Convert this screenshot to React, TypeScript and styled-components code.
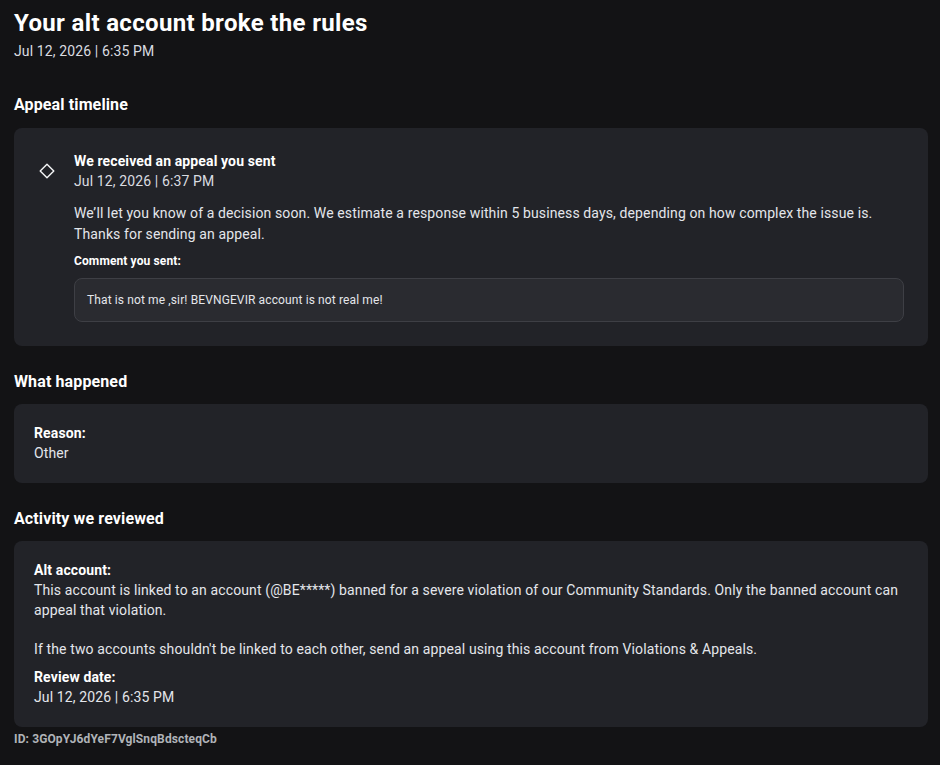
import styled, { createGlobalStyle } from 'styled-components';

const GlobalStyle = createGlobalStyle`
	html, body {
		margin: 0;
		background: #131315;
	}
	body {
		font-family: Roboto, 'Liberation Sans', sans-serif;
		color: #e4e6eb;
		letter-spacing: 0.12px;
		-webkit-font-smoothing: antialiased;
	}
`;

const DiamondIcon = () => (
	<svg width="16" height="16" viewBox="0 0 16 16" fill="none">
		<path d="M8 1.2 L14.8 8 L8 14.8 L1.2 8 Z" stroke="#f5f6f7" strokeWidth="1.4" strokeLinejoin="round" />
	</svg>
);

export default function App() {
	return (
		<>
			<GlobalStyle />
			<Page>
				<Title>Your alt account broke the rules</Title>
				<DateLine>Jul 12, 2026 | 6:35 PM</DateLine>

				<Section first>
					<SectionTitle>Appeal timeline</SectionTitle>
					<Card timeline>
						<TimelineItem>
							<IconCell>
								<DiamondIcon />
							</IconCell>
							<div>
								<ItemTitle>We received an appeal you sent</ItemTitle>
								<DateLine>Jul 12, 2026 | 6:37 PM</DateLine>
							</div>
							<ItemBody>
								<Paragraph>
									We’ll let you know of a decision soon. We estimate a response within 5 business days, depending on how
									complex the issue is. Thanks for sending an appeal.
								</Paragraph>
								<SmallLabel>Comment you sent:</SmallLabel>
								<CommentBox>That is not me ,sir! BEVNGEVIR account is not real me!</CommentBox>
							</ItemBody>
						</TimelineItem>
					</Card>
				</Section>

				<Section>
					<SectionTitle>What happened</SectionTitle>
					<Card>
						<Field>
							<Label>Reason:</Label>
							<Value>Other</Value>
						</Field>
					</Card>
				</Section>

				<Section>
					<SectionTitle>Activity we reviewed</SectionTitle>
					<Card>
						<Field>
							<Label>Alt account:</Label>
							<Value>
								This account is linked to an account (@BE*****) banned for a severe violation of our Community Standards.
								Only the banned account can appeal that violation.
							</Value>
							<Value spaced>
								If the two accounts shouldn't be linked to each other, send an appeal using this account from Violations
								&amp; Appeals.
							</Value>
						</Field>
						<Field>
							<Label>Review date:</Label>
							<Value>Jul 12, 2026 | 6:35 PM</Value>
						</Field>
					</Card>
					<IdLine>ID: 3GOpYJ6dYeF7VglSnqBdscteqCb</IdLine>
				</Section>
			</Page>
		</>
	);
}

const Page = styled.div`
	padding: 9px 12px 24px 14px;
`;

const Title = styled.h1`
	margin: 0 0 4px;
	font-size: 24px;
	line-height: 28px;
	font-weight: 700;
	letter-spacing: 0.34px;
	color: #ffffff;
`;

const DateLine = styled.div`
	font-size: 14px;
	line-height: 20px;
	color: #dadce0;
`;

const SectionTitle = styled.h2`
	margin: 0 0 11px;
	font-size: 16px;
	line-height: 22px;
	font-weight: 700;
	color: #ffffff;
`;

const Section = styled.section<{ first?: boolean }>`
	margin-top: ${(p) => (p.first ? '33px' : '25px')};

	${SectionTitle} {
		margin-bottom: ${(p) => (p.first ? '12px' : '11px')};
	}
`;

const Card = styled.div<{ timeline?: boolean }>`
	display: flex;
	flex-direction: column;
	gap: 8px;
	background: #222328;
	border-radius: 8px;
	padding: ${(p) => (p.timeline ? '23px 24px 24px 20px' : '19px 20px 20px')};
`;

const TimelineItem = styled.div`
	display: grid;
	grid-template-columns: 26px 1fr;
	column-gap: 14px;
	row-gap: 12px;
	align-items: center;
`;

const IconCell = styled.div`
	display: flex;
	justify-content: center;
	align-items: center;
`;

const ItemTitle = styled.div`
	font-size: 14px;
	line-height: 20px;
	font-weight: 700;
	color: #ffffff;
`;

const ItemBody = styled.div`
	grid-column: 2;
	display: flex;
	flex-direction: column;
`;

const Paragraph = styled.p`
	margin: 0;
	font-size: 14px;
	line-height: 21px;
	color: #e4e6eb;
`;

const SmallLabel = styled.div`
	margin-top: 8px;
	font-size: 12px;
	line-height: 16px;
	font-weight: 700;
	color: #ffffff;
`;

const CommentBox = styled.div`
	margin-top: 9px;
	padding: 13px 12px;
	font-size: 12px;
	line-height: 16px;
	color: #e4e6eb;
	background: #2a2b30;
	border: 1px solid #3e3f45;
	border-radius: 8px;
`;

const Field = styled.div`
	display: flex;
	flex-direction: column;
`;

const Label = styled.div`
	font-size: 14px;
	line-height: 20px;
	font-weight: 700;
	color: #ffffff;
`;

const Value = styled.div<{ spaced?: boolean }>`
	margin-top: ${(p) => (p.spaced ? '19px' : '0')};
	font-size: 14px;
	line-height: 20px;
	color: #e4e6eb;
`;

const IdLine = styled.div`
	margin-top: 5px;
	font-size: 12px;
	line-height: 14px;
	font-weight: 700;
	color: #b0b3b8;
`;
